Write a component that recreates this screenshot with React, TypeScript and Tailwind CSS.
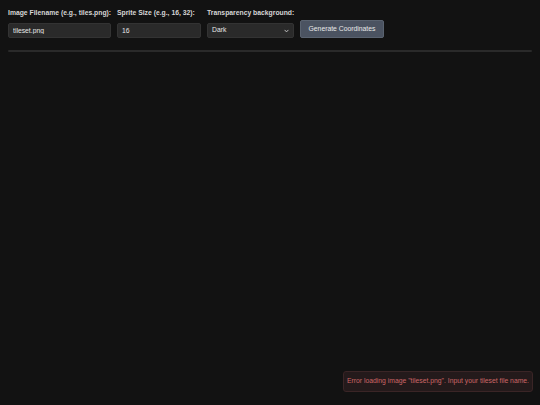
import React from "react";

const Field = ({
  label,
  width,
  children,
}: {
  label: string;
  width: string;
  children: React.ReactNode;
}) => {
  return (
    <div className={`flex flex-col ${width}`}>
      <label className="text-[6.8px] font-bold leading-[8px] text-[#d6d6d6] mb-[6px] whitespace-nowrap">
        {label}
      </label>
      {children}
    </div>
  );
};

export default function App() {
  return (
    <div className="min-h-screen w-full bg-[#121212] font-['Liberation_Sans',Arial,sans-serif] text-[#e2e2e2]">
      <div className="px-[8px] pt-[9px]">
        <div className="flex items-end gap-[6px]">
          <Field label="Image Filename (e.g., tiles.png):" width="w-[103px]">
            <input
              defaultValue="tileset.png"
              className="h-[15px] w-full rounded-[2px] border border-[#333] bg-[#2a2a2a] px-[4px] text-[6.8px] text-[#e6e6e6] outline-none"
            />
          </Field>
          <Field label="Sprite Size (e.g., 16, 32):" width="w-[84px]">
            <input
              defaultValue="16"
              className="h-[15px] w-full rounded-[2px] border border-[#333] bg-[#2a2a2a] px-[4px] text-[6.8px] text-[#e6e6e6] outline-none"
            />
          </Field>
          <Field label="Transparency background:" width="w-[87px]">
            <div className="relative h-[15px] w-full rounded-[2px] border border-[#333] bg-[#2a2a2a] flex items-center px-[4px] text-[6.8px] text-[#e6e6e6]">
              <span>Dark</span>
              <svg
                className="absolute right-[4px] top-[5px]"
                width="5"
                height="4"
                viewBox="0 0 5 4"
                fill="none"
              >
                <path d="M0.6 0.9 L2.5 2.9 L4.4 0.9" stroke="#cfcfcf" strokeWidth="0.9" />
              </svg>
            </div>
          </Field>
          <button className="h-[18px] w-[84px] rounded-[2px] border border-[#5a6370] bg-[#4b5361] text-[6.8px] text-[#e8e8e8]">
            Generate Coordinates
          </button>
        </div>
        <div className="mt-[12px] h-[2px] w-full rounded-full bg-[#2a2a2a]" />
      </div>

      <div className="fixed right-[7px] bottom-[13px] h-[21px] w-[190px] rounded-[3px] border border-[#3a2526] bg-[#241a1b] flex items-center justify-center text-[6.8px] text-[#cc6666] whitespace-nowrap">
        Error loading image "tileset.png". Input your tileset file name.
      </div>
    </div>
  );
}
